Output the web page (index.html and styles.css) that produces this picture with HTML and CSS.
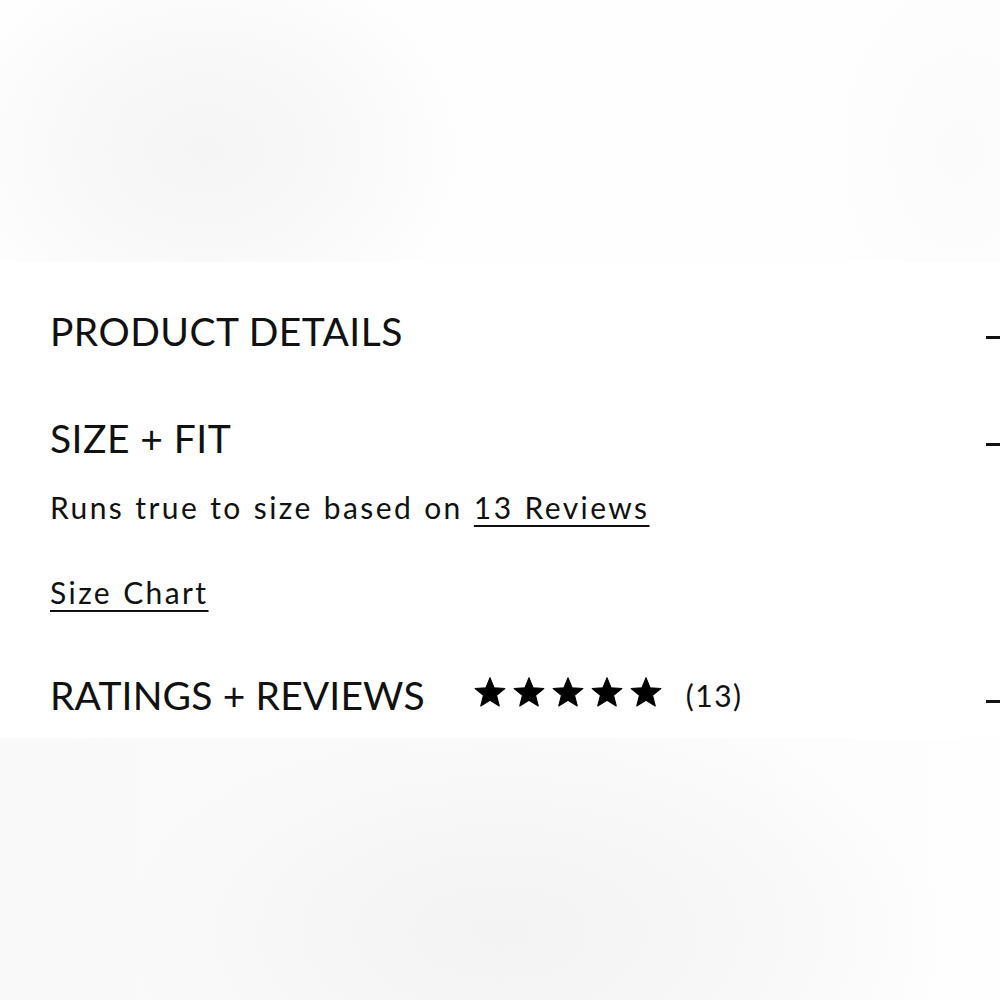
FILE: index.html
```html
<!DOCTYPE html>
<html lang="en">
<head>
<meta charset="utf-8">
<title>Product accordion</title>
<link rel="stylesheet" href="styles.css">
</head>
<body>
<div class="page">
  <div class="band band-top"></div>
  <section class="details">
    <div class="row row-first">
      <h2 class="heading">PRODUCT DETAILS</h2>
      <span class="minus"></span>
    </div>
    <div class="row row-size">
      <h2 class="heading">SIZE + FIT</h2>
      <span class="minus"></span>
    </div>
    <p class="body-text">Runs true to size based on <a class="link" href="#">13 Reviews</a></p>
    <p class="body-text chart"><a class="link" href="#">Size Chart</a></p>
    <div class="row row-ratings">
      <div class="ratings-left">
        <h2 class="heading">RATINGS + REVIEWS</h2>
        <div class="stars">
          <svg class="star" viewBox="0 0 24 23"><polygon points="12,0.6 15.12,8.21 23.4,8.8 17.04,14.14 19.1,22.2 12,17.8 4.9,22.2 6.96,14.14 0.6,8.8 8.88,8.21"/></svg>
          <svg class="star" viewBox="0 0 24 23"><polygon points="12,0.6 15.12,8.21 23.4,8.8 17.04,14.14 19.1,22.2 12,17.8 4.9,22.2 6.96,14.14 0.6,8.8 8.88,8.21"/></svg>
          <svg class="star" viewBox="0 0 24 23"><polygon points="12,0.6 15.12,8.21 23.4,8.8 17.04,14.14 19.1,22.2 12,17.8 4.9,22.2 6.96,14.14 0.6,8.8 8.88,8.21"/></svg>
          <svg class="star" viewBox="0 0 24 23"><polygon points="12,0.6 15.12,8.21 23.4,8.8 17.04,14.14 19.1,22.2 12,17.8 4.9,22.2 6.96,14.14 0.6,8.8 8.88,8.21"/></svg>
          <svg class="star" viewBox="0 0 24 23"><polygon points="12,0.6 15.12,8.21 23.4,8.8 17.04,14.14 19.1,22.2 12,17.8 4.9,22.2 6.96,14.14 0.6,8.8 8.88,8.21"/></svg>
        </div>
        <span class="count">(13)</span>
      </div>
      <span class="minus"></span>
    </div>
  </section>
  <div class="band band-bottom"></div>
</div>
</body>
</html>
```

FILE: styles.css
```css
html, body {
  margin: 0;
  padding: 0;
  background: #ffffff;
}

.page {
  width: 1000px;
  height: 1000px;
  overflow: hidden;
  display: flex;
  flex-direction: column;
  font-family: "Lato", "Liberation Sans", sans-serif;
  color: #111111;
}

.band {
  flex: none;
}

.band-top {
  height: 262px;
  background:
    radial-gradient(ellipse 260px 200px at 205px 150px, #f5f5f5 0%, #f8f8f8 45%, #fbfbfb 75%, rgba(253,253,253,0) 100%),
    radial-gradient(ellipse 140px 200px at 960px 150px, #fbfbfb 0%, rgba(255,255,255,0) 100%),
    #fefefe;
}

.band-bottom {
  flex: 1;
  background:
    radial-gradient(ellipse 440px 240px at 500px 195px, #f3f3f3 0%, #f6f6f6 40%, #f9f9f9 70%, rgba(252,252,252,0) 100%),
    linear-gradient(90deg, #f9f9f9 0%, #fbfbfb 55%, #fefefe 100%);
}

.details {
  flex: none;
  display: flex;
  flex-direction: column;
  padding: 49px 0 23px 50px;
}

.row {
  display: flex;
  justify-content: space-between;
  align-items: flex-start;
  height: 40px;
}

.row-size {
  margin-top: 67px;
}

.row-ratings {
  margin-top: 68px;
}

.heading {
  margin: 0;
  font-size: 39px;
  line-height: 40px;
  font-weight: 400;
  letter-spacing: 0.45px;
  white-space: nowrap;
}

.row-ratings .heading {
  letter-spacing: 0.15px;
}

.minus {
  display: block;
  width: 14px;
  height: 3px;
  margin-top: 25px;
  background: #111111;
}

.body-text {
  margin: 34px 0 0 0;
  font-size: 30px;
  line-height: 30px;
  height: 30px;
  letter-spacing: 2.4px;
  word-spacing: 1px;
  white-space: nowrap;
}

.body-text.chart {
  margin-top: 55px;
}

.link {
  color: #111111;
  text-decoration: underline;
  text-decoration-thickness: 2px;
  text-underline-offset: 6px;
}

.ratings-left {
  display: flex;
  align-items: flex-start;
}

.stars {
  display: flex;
  gap: 7px;
  margin: 2px 0 0 49px;
}

.star {
  width: 32px;
  height: 30px;
  fill: #000000;
  stroke: #000000;
  stroke-width: 0.8;
  stroke-linejoin: round;
}

.count {
  margin: 5px 0 0 24px;
  font-size: 30px;
  line-height: 30px;
  letter-spacing: 1.5px;
}
```
